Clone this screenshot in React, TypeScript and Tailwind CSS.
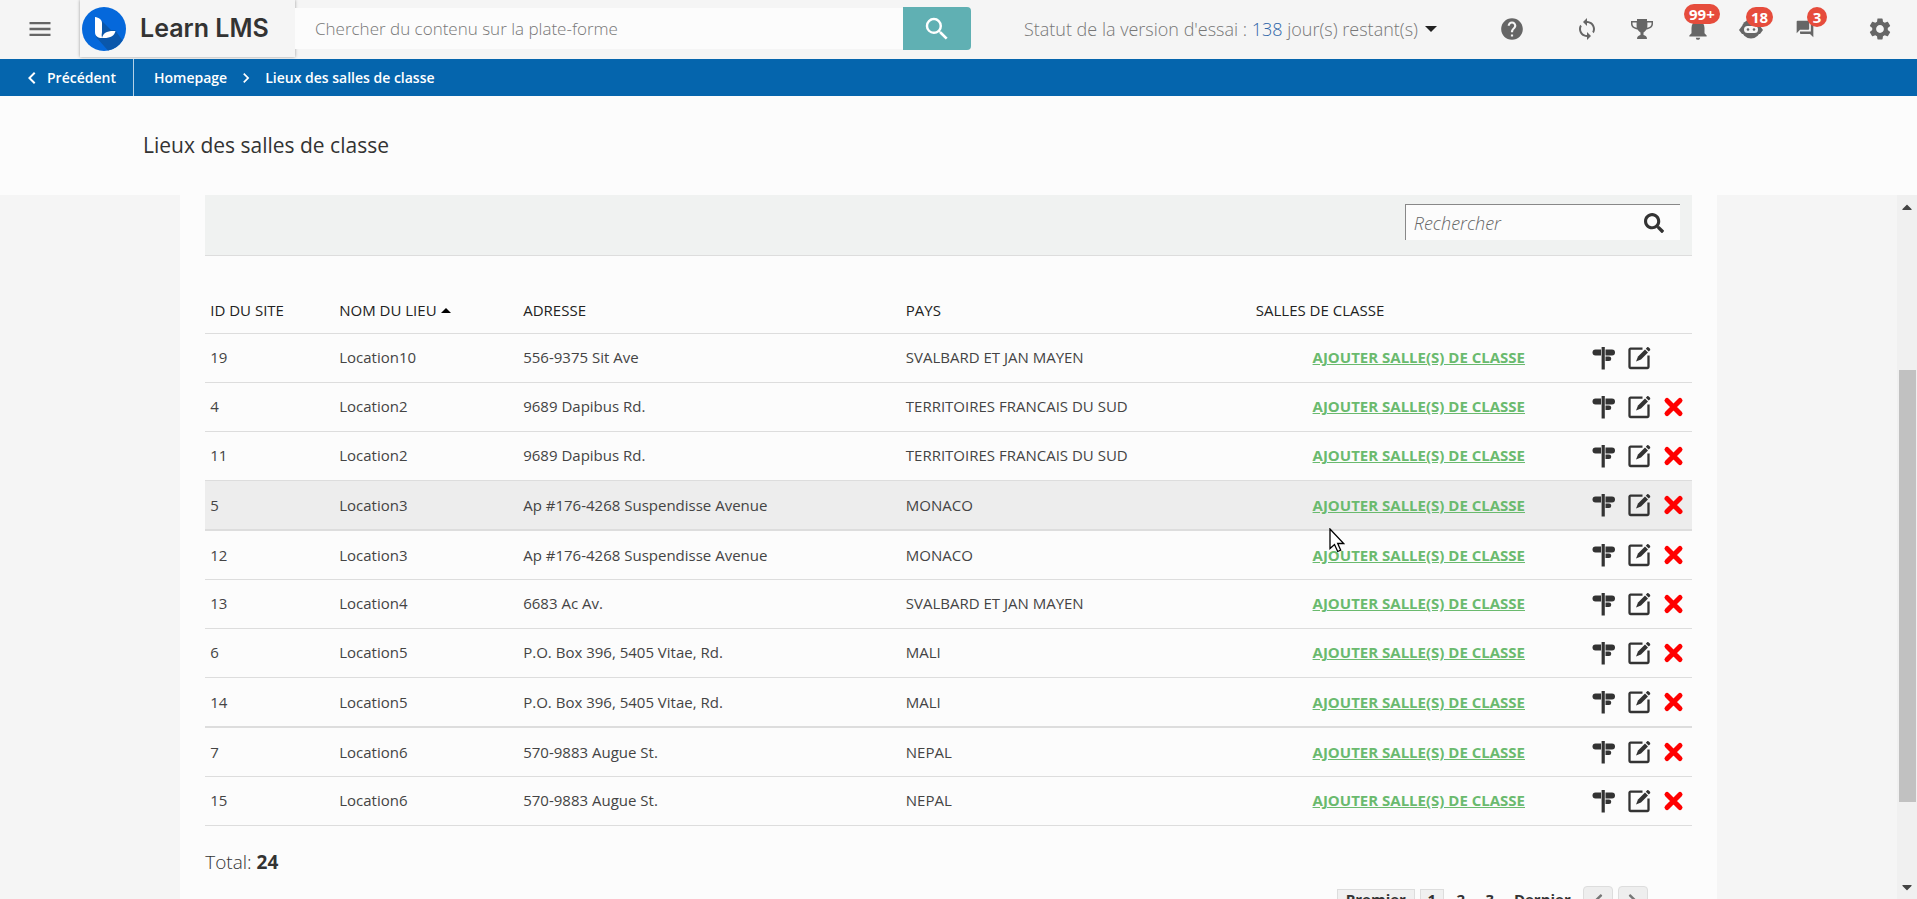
import { FaCaretDown, FaCaretUp, FaChevronLeft, FaChevronRight, FaSearch } from "react-icons/fa";
import {
  MdChevronLeft,
  MdChevronRight,
  MdForum,
  MdHelp,
  MdMenu,
  MdNotifications,
  MdSearch,
  MdSettings,
  MdSync,
} from "react-icons/md";

interface Location {
  id: number;
  name: string;
  address: string;
  country: string;
  removable: boolean;
  active?: boolean;
  divider?: boolean;
}

const locations: Location[] = [
  { id: 19, name: "Location10", address: "556-9375 Sit Ave", country: "SVALBARD ET JAN MAYEN", removable: false },
  { id: 4, name: "Location2", address: "9689 Dapibus Rd.", country: "TERRITOIRES FRANCAIS DU SUD", removable: true },
  { id: 11, name: "Location2", address: "9689 Dapibus Rd.", country: "TERRITOIRES FRANCAIS DU SUD", removable: true },
  { id: 5, name: "Location3", address: "Ap #176-4268 Suspendisse Avenue", country: "MONACO", removable: true, active: true, divider: true },
  { id: 12, name: "Location3", address: "Ap #176-4268 Suspendisse Avenue", country: "MONACO", removable: true },
  { id: 13, name: "Location4", address: "6683 Ac Av.", country: "SVALBARD ET JAN MAYEN", removable: true },
  { id: 6, name: "Location5", address: "P.O. Box 396, 5405 Vitae, Rd.", country: "MALI", removable: true },
  { id: 14, name: "Location5", address: "P.O. Box 396, 5405 Vitae, Rd.", country: "MALI", removable: true, divider: true },
  { id: 7, name: "Location6", address: "570-9883 Augue St.", country: "NEPAL", removable: true },
  { id: 15, name: "Location6", address: "570-9883 Augue St.", country: "NEPAL", removable: true },
];

function Logo() {
  return (
    <svg viewBox="0 0 44 44" className="size-11" aria-hidden="true">
      <circle cx="22" cy="22" r="22" fill="#0568db" />
      <path d="M20 14 L29 23 H33 L40.500 33.500 A22 22 0 0 1 26 43.600 L14 30 Z" fill="#0a57ab" />
      <path d="M13 10 C17 10.500 20 12.500 20 16 V25 C19.500 27 19.500 29 20 31 C16 31 13 29 13 25 Z" fill="#fff" />
      <path d="M20 31 C21 26 25 23.500 33.500 24 C32.500 29 28 31.500 20 31 Z" fill="#fff" />
    </svg>
  );
}

function Trophy() {
  return (
    <svg viewBox="0 0 22 20" className="w-[22px] h-5" fill="currentColor" aria-hidden="true">
      <path d="M6 0h10v2h6v3c0 3-3 5-6.500 5.500C14.500 12 13.500 13 12.500 13.400V16c2 .3 3.500 1.500 3.500 4H6c0-2.500 1.500-3.700 3.500-4v-2.600C8.500 13 7.500 12 6.500 10.500 3 10 0 8 0 5V2h6zM1.500 3.500V5c0 2 1.800 3.200 4.300 3.800C5.500 7 5.600 5 5.600 3.500zm19 0h-4.100c0 1.500.1 3.500-.2 5.300 2.500-.6 4.300-1.800 4.300-3.800z" />
    </svg>
  );
}

function Robot() {
  return (
    <svg viewBox="0 0 24 20" className="w-6 h-5" aria-hidden="true">
      <path d="M0 11l3-4h18l3 4-3 4H3z" fill="currentColor" />
      <circle cx="12" cy="10" r="9.500" fill="currentColor" />
      <rect x="5" y="7" width="14" height="7" rx="3.500" fill="#f5f5f5" />
      <circle cx="9" cy="10.500" r="1.300" fill="currentColor" />
      <circle cx="15" cy="10.500" r="1.300" fill="currentColor" />
    </svg>
  );
}

function SignpostIcon() {
  return (
    <svg viewBox="0 0 24 24" className="size-6" fill="#333" aria-hidden="true">
      <path d="M3.500 3.500H9v6H3.500a3 3 0 0 1 0-6z" />
      <path d="M13.500 3.500h6.500a3 3 0 0 1 0 6h-6.500z" />
      <path d="M13.500 10.500H17a2 2 0 0 1 0 4.500h-3.500z" />
      <rect x="9.600" y="1" width="3.200" height="22.500" />
    </svg>
  );
}

function EditIcon() {
  return (
    <svg viewBox="0 0 24 24" className="size-6" aria-hidden="true">
      <path d="M15.500 2.700H3.500a1 1 0 0 0-1 1V21a1 1 0 0 0 1 1h17a1 1 0 0 0 1-1V9.500" fill="none" stroke="#333" strokeWidth="2.300" />
      <path d="M9 15.500l2-5 7-7 3 3-7 7z" fill="#333" />
      <path d="M18.800 2.700l1.400-1.400c.9-.9 3.900 1.900 2.900 2.900l-1.400 1.400z" fill="#333" />
    </svg>
  );
}

function DeleteIcon() {
  return (
    <svg viewBox="0 0 24 24" className="size-6" aria-hidden="true">
      <path d="M5 5.500L18 18.500M18 5.500L5 18.500" fill="none" stroke="#f00" strokeWidth="5" strokeLinecap="round" />
    </svg>
  );
}

function Pointer() {
  return (
    <svg viewBox="0 0 16 25" className="absolute left-4 top-[34px] z-10 w-4 h-[25px]" aria-hidden="true">
      <path d="M1 1v19.500l4.500-4 3.200 7 3-1.300-3-6.700h6z" fill="#fff" stroke="#000" strokeWidth="1.300" />
    </svg>
  );
}

function Badge({ children, className }: { children: string; className: string }) {
  return (
    <span className={`absolute -top-3 min-w-5 h-5 px-[5px] rounded-full bg-[#e64c3c] text-white text-[15px] leading-5 font-bold text-center ${className}`}>
      {children}
    </span>
  );
}

export default function App() {
  return (
    <div className="h-screen flex flex-col overflow-hidden bg-[#fcfcfc] text-[#333] font-['Open_Sans',sans-serif]">
      {/* Top bar */}
      <header className="h-[59px] pb-0.5 shrink-0 flex items-center bg-[#f5f5f5] text-[#666]">
        <button aria-label="Menu" className="w-20 shrink-0 flex justify-center">
          <MdMenu className="size-7" />
        </button>
        <a href="#" className="h-full w-[215px] shrink-0 flex items-center gap-[14px] pl-0.5 text-[#333] shadow-[0_0_3px_#999]">
          <Logo />
          <span className="text-[25px] font-semibold font-[Inter,sans-serif]">Learn LMS</span>
        </a>
        <form className="flex flex-1 items-center">
          <input
            type="search"
            aria-label="Chercher du contenu sur la plate-forme"
            placeholder="Chercher du contenu sur la plate-forme"
            className="flex-1 min-w-0 h-[41px] px-5 bg-[#fcfcfc] text-[17px] font-light placeholder:text-[#777] outline-none"
          />
          <button type="button" aria-label="Chercher" className="w-[68px] h-[43px] flex items-center justify-center rounded-r bg-[#60b0b3] text-white">
            <MdSearch className="size-[30px]" />
          </button>
        </form>
        <div className="flex items-center shrink-0">
          <button className="ml-[53px] flex items-center gap-[7px] text-lg font-light text-[#777]">
            <span>
              Statut de la version d'essai : <span className="text-[#2f66a8]">138</span> jour(s) restant(s)
            </span>
            <span className="border-x-[6px] border-t-[6px] border-x-transparent border-t-[#222]" />
          </button>
          <button aria-label="Aide" className="ml-[62px]"><MdHelp className="size-[26px]" /></button>
          <button aria-label="Actualiser" className="ml-[50px]"><MdSync className="size-6" /></button>
          <button aria-label="Trophées" className="ml-8"><Trophy /></button>
          <button aria-label="Notifications" className="relative ml-8"><MdNotifications className="size-[26px]" /><Badge className="-left-px">99+</Badge></button>
          <button aria-label="Assistant" className="relative ml-7"><Robot /><Badge className="left-[7px]">18</Badge></button>
          <button aria-label="Messages" className="relative ml-8"><MdForum className="size-5" /><Badge className="left-3">3</Badge></button>
          <button aria-label="Paramètres" className="ml-[52px] mr-6"><MdSettings className="size-[26px]" /></button>
        </div>
      </header>

      {/* Breadcrumb */}
      <nav className="h-[37px] shrink-0 flex items-center bg-[#0565ad] text-white text-sm font-semibold">
        <a href="#" className="h-full w-[134px] pl-5 flex items-center gap-[3px] border-r border-white/70">
          <MdChevronLeft className="size-6" />
          Précédent
        </a>
        <a href="#" className="ml-5">Homepage</a>
        <MdChevronRight className="size-5 mx-[9px]" />
        <a href="#">Lieux des salles de classe</a>
      </nav>

      <div className="h-[99px] shrink-0 flex items-center px-[143px]">
        <h1 className="text-[21px]">Lieux des salles de classe</h1>
      </div>

      <div className="flex flex-1 min-h-0">
        <main className="flex-1 min-w-0 overflow-hidden bg-[#f5f5f5]">
          <div className="w-[81%] min-h-full mx-auto px-[25px] bg-[#fcfcfc]">
            <div className="h-[61px] pt-[9px] px-3 flex justify-end items-start border-b border-[#ddd] bg-[#f0f2f1]">
              <label className="w-[275px] h-9 flex items-center pl-2 pr-4 bg-[#fcfcfc] border-t border-l border-[#888]">
                <input
                  type="search"
                  aria-label="Rechercher"
                  placeholder="Rechercher"
                  className="flex-1 min-w-0 text-lg font-light italic placeholder:text-[#666] outline-none"
                />
                <FaSearch className="size-5" />
              </label>
            </div>

            <table className="w-full mt-7 table-fixed text-left text-[15px]">
              <colgroup>
                <col className="w-[129px]" />
                <col className="w-[184px]" />
                <col />
                <col className="w-[350px]" />
                <col className="w-[336px]" />
                <col className="w-[105px]" />
              </colgroup>
              <thead className="text-[#222]">
                <tr className="h-[49px] border-b border-[#ddd]">
                  <th className="px-[5px] pt-1 font-medium">ID DU SITE</th>
                  <th className="px-[5px] pt-1 font-medium" aria-sort="ascending">
                    <span className="flex items-center gap-1">
                      NOM DU LIEU
                      <span className="border-x-[5px] border-b-[5px] border-x-transparent border-b-black" />
                    </span>
                  </th>
                  <th className="px-[5px] pt-1 font-medium">ADRESSE</th>
                  <th className="px-[5px] pt-1 font-medium">PAYS</th>
                  <th className="px-[5px] pt-1 font-medium">SALLES DE CLASSE</th>
                  <th aria-label="Actions" />
                </tr>
              </thead>
              <tbody className="text-[#444]">
                {locations.map((loc) => (
                  <tr
                    key={loc.id}
                    className={`border-[#ddd] ${loc.divider ? "h-[50px] border-b-2" : "h-[49px] border-b"} ${loc.active ? "bg-[#ededed]" : ""}`}
                  >
                    <td className="px-[5px]">{loc.id}</td>
                    <td className="px-[5px]">{loc.name}</td>
                    <td className="px-[5px]">{loc.address}</td>
                    <td className="px-[5px]">{loc.country}</td>
                    <td className="text-center">
                      <span className="relative inline-block">
                        <a href="#" className="font-bold text-[#6aba6e] underline">AJOUTER SALLE(S) DE CLASSE</a>
                        {loc.active && <Pointer />}
                      </span>
                    </td>
                    <td>
                      <div className="grid grid-cols-3 justify-items-center items-center">
                        <button aria-label="Voir sur la carte"><SignpostIcon /></button>
                        <button aria-label="Modifier"><EditIcon /></button>
                        {loc.removable && (
                          <button aria-label="Supprimer"><DeleteIcon /></button>
                        )}
                      </div>
                    </td>
                  </tr>
                ))}
              </tbody>
            </table>

            <p className="mt-5 text-[19px] leading-8 font-light">
              Total: <strong className="font-bold">24</strong>
            </p>

            {/* Pagination */}
            <div className="mt-2 mr-11 flex justify-end items-start gap-[5px] text-[15px] leading-[18px] font-bold">
              <button className="mt-[3px] pb-1 px-2 border border-[#ddd] bg-[#f0f0f0]">Premier</button>
              <button className="mt-[3px] pb-1 w-6 border border-[#ddd] bg-[#f0f0f0]">1</button>
              <button className="mt-[3px] pb-1 w-6 border border-transparent">2</button>
              <button className="mt-[3px] pb-1 w-6 border border-transparent">3</button>
              <button className="mt-[3px] pb-1 px-[6px] border border-transparent">Dernier</button>
              <button aria-label="Page précédente" className="size-[30px] flex items-center justify-center rounded border border-[#ddd] bg-[#eee] text-[#777]">
                <FaChevronLeft className="size-4" />
              </button>
              <button aria-label="Page suivante" className="size-[30px] flex items-center justify-center rounded border border-[#ddd] bg-[#eee] text-[#777]">
                <FaChevronRight className="size-4" />
              </button>
            </div>
          </div>
        </main>

        {/* Scrollbar */}
        <div className="w-5 shrink-0 flex flex-col items-center py-1 bg-[#f0f0f0] text-[#444]" aria-hidden="true">
          <FaCaretUp className="size-4" />
          <div className="flex-2" />
          <div className="w-[17px] h-[62%] bg-[#c1c1c1]" />
          <div className="flex-1" />
          <FaCaretDown className="size-4" />
        </div>
      </div>
    </div>
  );
}
